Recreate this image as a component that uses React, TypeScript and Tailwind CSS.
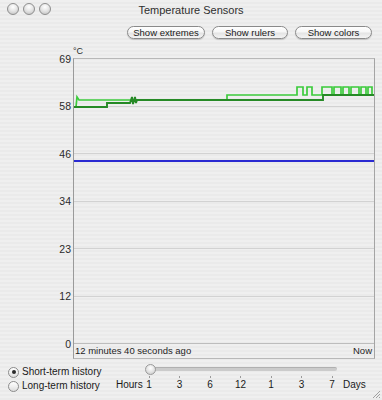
import React from "react";

function AquaButton({ w, children }: { w: string; children: React.ReactNode }) {
  return (
    <div
      className={`${w} h-[13px] rounded-full border border-[#8a8a8a] bg-[linear-gradient(to_bottom,#ffffff_0%,#f6f6f6_45%,#e4e4e4_55%,#f4f4f4_100%)] shadow-[0_1px_1px_rgba(0,0,0,0.18)] flex items-center justify-center text-[9.5px] leading-[11px] text-[#1a1a1a]`}
    >
      {children}
    </div>
  );
}

function Radio({ checked, label }: { checked: boolean; label: string }) {
  return (
    <div className="h-[14px] flex items-center">
      <div className="w-[11px] h-[11px] rounded-full border border-[#8c8c8c] bg-[linear-gradient(to_bottom,#ffffff_0%,#f0f0f0_50%,#dcdcdc_100%)] flex items-center justify-center">
        {checked && <div className="w-[4px] h-[4px] rounded-full bg-[#2a2a2a]" />}
      </div>
      <span className="ml-[3px] text-[10px] leading-[14px] text-[#1a1a1a]">{label}</span>
    </div>
  );
}

export default function App() {
  const yLabels = ["69", "58", "46", "34", "23", "12", "0"];
  const ticks = ["1", "3", "6", "12", "1", "3", "7"];
  const grid = [47.5, 94.5, 142.5, 189.5, 237.5];

  const bright =
    "2,48 3,38 5,41 153,41 153,36 223,36 223,28 229,28 229,36 233,36 233,28 238,28 238,36 248,36 248,28 258,28 258,36 260,36 260,28 267,28 267,36 269,36 269,28 275,28 275,36 277,36 277,28 285,28 285,36 287,36 287,28 292,28 292,36 294,36 294,28 298,28 298,36 300,36";
  const dark =
    "0,48 33,48 33,44 56,44 58,38 59,45 61,38 62,44 63,41 249,41 249,36 300,36";

  return (
    <div className="w-[382px] h-[400px] relative overflow-hidden bg-[repeating-linear-gradient(to_bottom,#efefef_0px,#efefef_2px,#eaeaea_2px,#eaeaea_4px)] text-[#1e1e1e] font-['Liberation_Sans',Arial,sans-serif]">
      {/* Title bar */}
      <div className="h-[21px] grid grid-cols-[1fr_auto_1fr] items-start pt-[3px]">
        <div className="flex gap-[4px] pl-[7px]">
          {[0, 1, 2].map((i) => (
            <div
              key={i}
              className="w-[12px] h-[12px] rounded-full border border-[#8e8e8e] bg-[radial-gradient(circle_at_50%_30%,#ffffff_0%,#e6e6e6_45%,#bdbdbd_100%)]"
            />
          ))}
        </div>
        <div className="text-[11px] leading-[14px] text-[#2e2e2e]">Temperature Sensors</div>
        <div />
      </div>

      {/* Buttons */}
      <div className="flex justify-end gap-[7px] pr-[10px] pt-[5px]">
        <AquaButton w="w-[78px]">Show extremes</AquaButton>
        <AquaButton w="w-[76px]">Show rulers</AquaButton>
        <AquaButton w="w-[77px]">Show colors</AquaButton>
      </div>

      {/* Chart */}
      <div className="flex mt-[5px]">
        <div className="w-[73px] pt-[8.5px]">
          <div className="h-[297.5px] flex flex-col justify-between items-end pr-[2px]">
            {yLabels.map((l) => (
              <div key={l} className="h-[12px] leading-[12px] text-[10.5px] text-[#2a2a2a]">
                {l}
              </div>
            ))}
          </div>
        </div>
        <div className="flex flex-col">
          <div className="h-[14px] pt-[2px] text-[9px] leading-[10px] text-[#2a2a2a]">°C</div>
          <div className="w-[302px] border border-[#b8b8b8] border-l-[#9a9a9a] border-r-[#a4a4a4] flex flex-col">
            <svg width="300" height="284" className="block">
              {grid.map((y) => (
                <line key={y} x1="0" x2="300" y1={y} y2={y} stroke="#d2d2d2" strokeWidth="1" />
              ))}
              <line x1="0" x2="300" y1="102" y2="102" stroke="#2a2ad2" strokeWidth="2" />
              <polyline points={bright} fill="none" stroke="#3ccc3c" strokeWidth="1.7" />
              <polyline points={dark} fill="none" stroke="#268a26" strokeWidth="1.9" />
            </svg>
            <div className="h-[15px] border-t border-[#bdbdbd] flex justify-between items-center pl-[1px] pr-[2px] text-[9.5px] leading-[12px] text-[#1e1e1e]">
              <span>12 minutes 40 seconds ago</span>
              <span>Now</span>
            </div>
          </div>
        </div>
      </div>

      {/* Bottom controls */}
      <div className="flex pl-[8px] mt-[3px] text-[10px] leading-[12px] text-[#1a1a1a]">
        <div className="w-[108px] flex flex-col pt-[3px]">
          <Radio checked label="Short-term history" />
          <Radio checked={false} label="Long-term history" />
        </div>
        <div className="w-[27px] pt-[17px]">Hours</div>
        <div className="w-[195px] flex flex-col">
          <div className="pt-[5px] pl-[4px] pr-[1px]">
            <div className="relative h-[4px] rounded-full bg-[#cbcbcb] border-t border-[#b0b0b0]">
              <div className="absolute left-[-2px] top-[-4px] w-[11px] h-[11px] rounded-full border border-[#9a9a9a] bg-[radial-gradient(circle_at_50%_35%,#ffffff_0%,#e4e4e4_50%,#c4c4c4_100%)]" />
            </div>
          </div>
          <div className="mt-[5px] h-[3px] flex justify-between">
            {ticks.map((t, i) => (
              <div key={i} className="w-[12px] flex justify-center">
                <div className="w-[1px] h-[2px] bg-[#9a9a9a]" />
              </div>
            ))}
          </div>
          <div className="flex justify-between">
            {ticks.map((t, i) => (
              <div key={i} className="w-[12px] text-center leading-[12px]">
                {t}
              </div>
            ))}
          </div>
        </div>
        <div className="ml-[5px] pt-[17px]">Days</div>
      </div>

      {/* Resize grip */}
      <svg className="absolute right-[1px] bottom-[1px]" width="10" height="10">
        <line x1="9" y1="2" x2="2" y2="9" stroke="#a0a0a0" strokeWidth="1" />
        <line x1="9" y1="5" x2="5" y2="9" stroke="#a0a0a0" strokeWidth="1" />
        <line x1="9" y1="8" x2="8" y2="9" stroke="#a0a0a0" strokeWidth="1" />
      </svg>
    </div>
  );
}
